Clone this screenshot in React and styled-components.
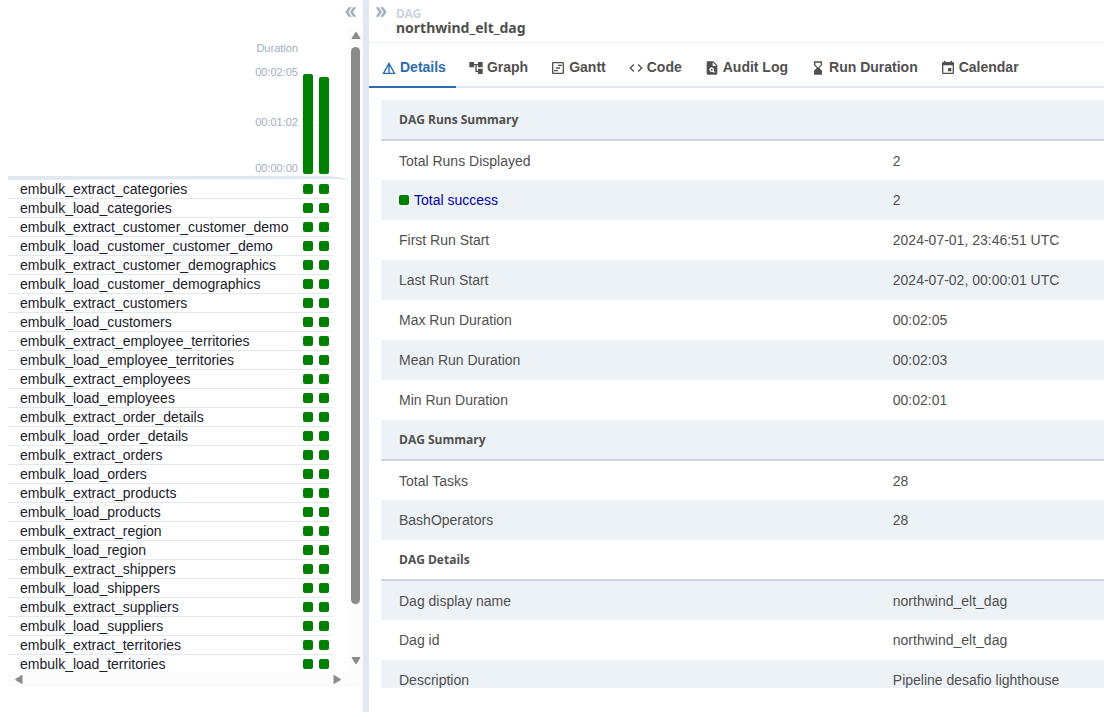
import React from 'react';
import styled, { createGlobalStyle } from 'styled-components';
import {
  MdDetails,
  MdAccountTree,
  MdOutlineViewTimeline,
  MdCode,
  MdPlagiarism,
  MdHourglassBottom,
  MdEvent,
  MdDoubleArrow,
} from 'react-icons/md';

const sans = '"Liberation Sans", Arial, sans-serif';
const heading = '"Noto Sans", "Open Sans", sans-serif';

const GlobalStyle = createGlobalStyle`
  *, *::before, *::after { box-sizing: border-box; }
  body { margin: 0; background: #fff; color: #51504f; font: 14px/18px ${sans}; }
`;

const Page = styled.div`
  display: flex;
  height: 100vh;
  padding-bottom: 5px;
  overflow: hidden;
`;

const GridPanel = styled.aside`
  flex: none;
  display: flex;
  flex-direction: column;
  width: 363px;
  padding: 0 0 25px 8px;
`;

const PanelTop = styled.div`
  display: flex;
  flex: none;
  justify-content: flex-end;
  align-items: center;
  height: 28px;
  padding: 0 4px 4px 0;
`;

const IconButton = styled.button`
  display: flex;
  padding: 0;
  border: 0;
  background: none;
  color: #a0aec0;
  font-size: 16px;
  cursor: pointer;
  svg { transform: ${(p) => (p.$flip ? 'rotate(180deg)' : 'none')}; }
`;

const ScrollFrame = styled.div`
  flex: 1;
  min-height: 0;
  display: grid;
  grid-template: minmax(0, 1fr) 15px / minmax(0, 1fr) 15px;
`;

const ScrollContent = styled.div`
  overflow: hidden;
`;

const Track = styled.div`
  display: flex;
  flex-direction: ${(p) => (p.$vertical ? 'column' : 'row')};
  justify-content: space-between;
  align-items: center;
  padding: ${(p) => (p.$vertical ? '3px 0 7px' : '0 6px')};
  background: #fcfcfc;
`;

const Thumb = styled.div`
  flex: 0 1 557px;
  width: 9px;
  margin: 7px 0 auto;
  border-radius: 5px;
  background: #8b8b8b;
`;

const Corner = styled.div`
  background: #fcfcfc;
`;

const Chart = styled.div`
  display: flex;
  justify-content: flex-end;
  height: 148px;
  padding-right: 16px;
`;

const ChartRule = styled.div`
  height: 4px;
  background: #e2e8f0;
  clip-path: polygon(0 0, calc(100% - 16px) 0, 100% 75%, 100% 100%, calc(100% - 16px) 75%, 0 100%);
`;

const Axis = styled.div`
  display: flex;
  flex-direction: column;
  align-items: flex-end;
  padding: 14px 5px 0 0;
  color: #a0aec0;
  font-size: 11px;
  line-height: 12px;
  font-weight: 500;
`;

const Tick = styled.span`
  margin-top: ${(p) => p.$gap}px;
`;

const Bars = styled.div`
  display: flex;
  gap: 6px;
  align-items: flex-end;
  height: 100px;
  margin-top: 46px;
  padding: 0 3px 0 0;
  background: linear-gradient(#edf2f7, #edf2f7) 0 1px / 100% 1px no-repeat,
    linear-gradient(#edf2f7, #edf2f7) 0 51px / 100% 1px no-repeat,
    linear-gradient(#edf2f7, #edf2f7) 0 97px / 100% 1px no-repeat;
`;

const Bar = styled.button`
  width: 10px;
  padding: 0;
  border: 0;
  border-radius: 2px;
  background: #008000;
  cursor: pointer;
`;

const TaskTable = styled.table`
  width: 324px;
  border-collapse: separate;
  border-spacing: 0;
  color: #1a202c;
  td, th {
    height: 19px;
    padding: 0;
    border-bottom: 1px solid #e2e8f0;
    font-weight: 400;
    text-align: left;
    line-height: 18px;
    white-space: nowrap;
  }
  th { padding-left: 12px; }
  td { width: 16px; }
  td:last-child { width: 13px; }
`;

const TaskStatus = styled.span`
  display: block;
  width: 10px;
  height: 10px;
  border-radius: 2px;
  background: #008000;
`;

const Divider = styled.div`
  flex: none;
  width: 6px;
  background: #e2e8f0;
`;

const DetailPanel = styled.main`
  flex: 1;
  min-width: 0;
  display: flex;
  flex-direction: column;
  padding-bottom: 24px;
`;

const DetailHeader = styled.header`
  flex: none;
  display: flex;
  align-items: flex-start;
  gap: 7px;
  height: 43px;
  padding: 4px 4px 0;
  border-bottom: 1px solid #edf2f7;
`;

const Crumb = styled.div`
  padding-top: 2px;
  font-family: ${heading};
  font-weight: 700;
`;

const CrumbLabel = styled.div`
  color: #cbd5e0;
  font-size: 12px;
  line-height: 15px;
`;

const Title = styled.h1`
  margin: 0;
  font-size: 14px;
  line-height: 14px;
`;

const Tabs = styled.nav`
  flex: none;
  display: flex;
  height: 45px;
  border-bottom: 2px solid #e2e8f0;
`;

const Tab = styled.button`
  display: flex;
  align-items: center;
  gap: 3px;
  height: 45px;
  padding: 4px 10px 0 12px;
  border: 0;
  border-bottom: 2px solid ${(p) => (p.$active ? '#2b6cb0' : 'transparent')};
  background: none;
  color: ${(p) => (p.$active ? '#2b6cb0' : '#51504f')};
  font: 700 14px/18px ${sans};
  white-space: nowrap;
  cursor: pointer;
  svg { font-size: 16px; margin-top: 2px; }
`;

const DetailBody = styled.div`
  flex: 1;
  min-height: 0;
  overflow: hidden;
  padding: 12px 0 0 12px;
`;

const DetailTable = styled.table`
  width: 100%;
  border-collapse: collapse;
  table-layout: fixed;
  tr:nth-child(odd) { background: #edf2f7; }
  td, th {
    height: 40px;
    padding: 0 18px;
    text-align: left;
    vertical-align: middle;
  }
`;

const SectionHead = styled.th`
  border-bottom: 2px solid #cbd5e0;
  font: 700 12px/18px "Open Sans", "Noto Sans", sans-serif;
`;

const NameCol = styled.col`
  width: 68.3%;
`;

const StateLink = styled.a`
  display: inline-flex;
  align-items: center;
  gap: 5px;
  color: #0000b4;
  text-decoration: none;
`;

const entities = [
  'categories', 'customer_customer_demo', 'customer_demographics', 'customers',
  'employee_territories', 'employees', 'order_details', 'orders', 'products',
  'region', 'shippers', 'suppliers', 'territories',
];
const tasks = entities.flatMap((e) => [`embulk_extract_${e}`, `embulk_load_${e}`]);

const tabs = [
  ['Details', MdDetails],
  ['Graph', MdAccountTree],
  ['Gantt', MdOutlineViewTimeline],
  ['Code', MdCode],
  ['Audit Log', MdPlagiarism],
  ['Run Duration', MdHourglassBottom],
  ['Calendar', MdEvent],
];

const rows = [
  ['DAG Runs Summary'],
  ['Total Runs Displayed', '2'],
  ['Total success', '2'],
  ['First Run Start', '2024-07-01, 23:46:51 UTC'],
  ['Last Run Start', '2024-07-02, 00:00:01 UTC'],
  ['Max Run Duration', '00:02:05'],
  ['Mean Run Duration', '00:02:03'],
  ['Min Run Duration', '00:02:01'],
  ['DAG Summary'],
  ['Total Tasks', '28'],
  ['BashOperators', '28'],
  ['DAG Details'],
  ['Dag display name', 'northwind_elt_dag'],
  ['Dag id', 'northwind_elt_dag'],
  ['Description', 'Pipeline desafio lighthouse'],
];

const arrowPaths = {
  up: 'M.5 7.5 4.2 1.4Q5 .4 5.8 1.4L9.5 7.5Q9.5 8 9 8H1Q.5 8 .5 7.5Z',
  down: 'M.5 1.5 4.2 7.6Q5 8.6 5.8 7.6L9.5 1.5Q9.5 1 9 1H1Q.5 1 .5 1.5Z',
  left: 'M8.5.3v8.4q0 .5-.5.3L1.7 5.2Q.9 4.5 1.7 3.8L8 0Q8.5-.2 8.5.3Z',
  right: 'M1.5.3v8.4q0 .5.5.3L8.3 5.2Q9.1 4.5 8.3 3.8L2 0Q1.5-.2 1.5.3Z',
};

const Arrow = ({ dir }) => (
  <svg width="10" height="9" viewBox="0 0 10 9" fill="#8b8b8b" aria-hidden="true">
    <path d={arrowPaths[dir]} />
  </svg>
);

export default function App() {
  return (
    <>
      <GlobalStyle />
      <Page>
        <GridPanel>
          <PanelTop>
            <IconButton $flip aria-label="Collapse grid"><MdDoubleArrow /></IconButton>
          </PanelTop>
          <ScrollFrame>
            <ScrollContent>
              <Chart>
                <Axis>
                  <Tick $gap={0}>Duration</Tick>
                  <Tick $gap={12}>00:02:05</Tick>
                  <Tick $gap={38}>00:01:02</Tick>
                  <Tick $gap={34}>00:00:00</Tick>
                </Axis>
                <Bars>
                  <Bar aria-label="Run 1" style={{ height: '100%' }} />
                  <Bar aria-label="Run 2" style={{ height: '97%' }} />
                </Bars>
              </Chart>
              <ChartRule />
              <TaskTable>
                <tbody>
                  {tasks.map((t) => (
                    <tr key={t}>
                      <th scope="row">{t}</th>
                      <td><TaskStatus /></td>
                      <td><TaskStatus /></td>
                    </tr>
                  ))}
                </tbody>
              </TaskTable>
            </ScrollContent>
            <Track $vertical>
              <Arrow dir="up" />
              <Thumb />
              <Arrow dir="down" />
            </Track>
            <Track>
              <Arrow dir="left" />
              <Arrow dir="right" />
            </Track>
            <Corner />
          </ScrollFrame>
        </GridPanel>
        <Divider />
        <DetailPanel>
          <DetailHeader>
            <IconButton aria-label="Collapse details"><MdDoubleArrow /></IconButton>
            <Crumb>
              <CrumbLabel>DAG</CrumbLabel>
              <Title>northwind_elt_dag</Title>
            </Crumb>
          </DetailHeader>
          <Tabs>
            {tabs.map(([label, Icon], i) => (
              <Tab key={label} $active={i === 0}>
                <Icon />
                {label}
              </Tab>
            ))}
          </Tabs>
          <DetailBody>
            <DetailTable>
              <colgroup>
                <NameCol />
                <col />
              </colgroup>
              <tbody>
                {rows.map(([name, value]) => (
                  <tr key={name}>
                    {value === undefined ? (
                      <SectionHead colSpan={2}>{name}</SectionHead>
                    ) : (
                      <>
                        <td>
                          {name === 'Total success' ? (
                            <StateLink href="#success"><TaskStatus />{name}</StateLink>
                          ) : name}
                        </td>
                        <td>{value}</td>
                      </>
                    )}
                  </tr>
                ))}
              </tbody>
            </DetailTable>
          </DetailBody>
        </DetailPanel>
      </Page>
    </>
  );
}
